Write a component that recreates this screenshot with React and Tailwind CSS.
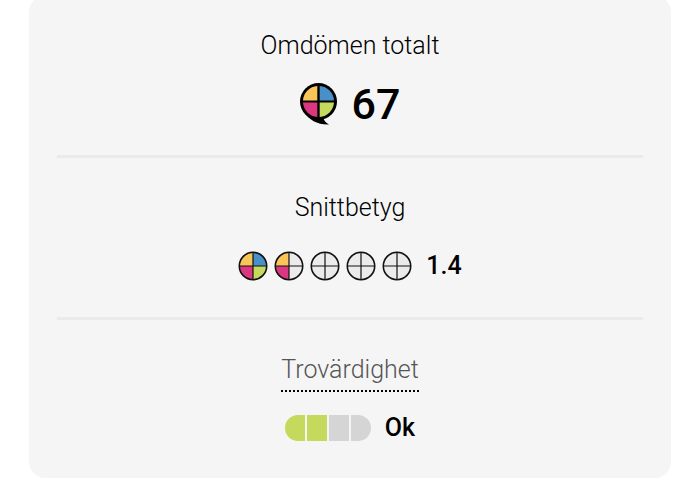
import React from 'react';

const YELLOW = '#f9c558';
const BLUE = '#4a90c8';
const PINK = '#db3780';
const GREEN = '#c5da5c';
const EMPTY = '#ebebeb';

const BubbleLogo = () => (
  <svg width="38" height="42" viewBox="0 0 38 42" aria-hidden="true">
    <path d="M4 29 C9 37 18 42 29 41.500 C25.500 39.500 24 37.500 23.500 35 Z" fill="#000" />
    <circle cx="18.500" cy="18.500" r="18.500" fill="#000" />
    <path d="M17.300 17.400 H3 A15.500 15.500 0 0 1 17.300 3 Z" fill={YELLOW} />
    <path d="M19.700 17.400 V3 A15.500 15.500 0 0 1 34 17.400 Z" fill={BLUE} />
    <path d="M17.300 19.600 V34 A15.500 15.500 0 0 1 3 19.600 Z" fill={PINK} />
    <path d="M19.700 19.600 H34 A15.500 15.500 0 0 1 19.700 34 Z" fill={GREEN} />
  </svg>
);

// Each circle holds four quarters, filled according to the score
const ScoreCircle = ({ colors }) => (
  <svg width="30" height="30" viewBox="0 0 30 30" aria-hidden="true">
    <path d="M15 15 H1 A14 14 0 0 1 15 1 Z" fill={colors[0]} />
    <path d="M15 15 V1 A14 14 0 0 1 29 15 Z" fill={colors[1]} />
    <path d="M15 15 V29 A14 14 0 0 1 1 15 Z" fill={colors[2]} />
    <path d="M15 15 H29 A14 14 0 0 1 15 29 Z" fill={colors[3]} />
    <path d="M15 1 V29 M1 15 H29" stroke="#111" strokeWidth="1.2" />
    <circle cx="15" cy="15" r="13.700" fill="none" stroke="#111" strokeWidth="1.600" />
  </svg>
);

const circles = [
  [YELLOW, BLUE, PINK, GREEN],
  [YELLOW, EMPTY, PINK, EMPTY],
  [EMPTY, EMPTY, EMPTY, EMPTY],
  [EMPTY, EMPTY, EMPTY, EMPTY],
  [EMPTY, EMPTY, EMPTY, EMPTY],
];

const App = () => {
  return (
    <div className="bg-white font-['Roboto',sans-serif] text-black">
      <div className="-mt-1 mx-[29px] px-7 bg-[#f5f5f5] rounded-2xl">
        <section className="flex flex-col items-center pt-[34px] pb-[27px] border-b-3 border-[#eaeaea]">
          <h2 className="text-[25px] leading-8 font-light">Omdömen totalt</h2>
          <div className="flex items-center gap-[14px] h-12 mt-[18px]">
            <BubbleLogo />
            <span className="text-[43px] leading-12 font-medium">67</span>
          </div>
        </section>

        <section className="flex flex-col items-center pt-[34px] pb-[27px] border-b-3 border-[#eaeaea]">
          <h2 className="text-[25px] leading-8 font-light">Snittbetyg</h2>
          <div className="flex items-center gap-[14px] h-12 mt-[18px]">
            <div className="flex gap-[6px]">
              {circles.map((colors, i) => <ScoreCircle key={i} colors={colors} />)}
            </div>
            <span className="text-[25px] leading-8 font-medium">1.4</span>
          </div>
        </section>

        <section className="flex flex-col items-center pt-[34px] pb-[26px]">
          <h2 className="text-[25px] leading-8 font-light text-[#555]">
            <a href="#trovardighet" className="block pb-1 border-b-2 border-dotted border-black">
              Trovärdighet
            </a>
          </h2>
          <div className="flex items-center gap-[14px] h-12 mt-3">
            <div className="flex gap-[2px] w-[86px] h-[26px] rounded-full overflow-hidden">
              <div className="flex-1 bg-[#c5da5c]" />
              <div className="flex-1 bg-[#c5da5c]" />
              <div className="flex-1 bg-[#d5d5d5]" />
              <div className="flex-1 bg-[#d5d5d5]" />
            </div>
            <span className="text-[25px] leading-8 font-medium">Ok</span>
          </div>
        </section>
      </div>
    </div>
  );
};

export default App;
